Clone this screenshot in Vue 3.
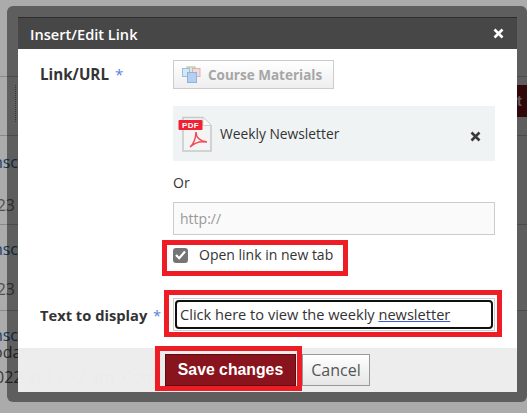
<template>
  <div class="screen">
    <div class="page" aria-hidden="true">
      <i class="rule r1"></i><i class="rule r2"></i><i class="rule r3"></i><i class="rule r4"></i>
      <i class="dots"></i>
      <i class="hatch"></i>
      <b class="red">t</b>
      <span class="link l1">nsc</span><span class="num n1">23</span>
      <span class="link l2">nsc</span><span class="num n2">23</span>
      <span class="link l3">nsc</span>
      <span class="body b1">odate.</span>
      <span class="body b2">022 at 11:32 am&nbsp; Comment</span>
    </div>
    <div class="shade"></div>
    <div class="frame">
      <section class="dialog">
        <header class="head">
          <h1>Insert/Edit Link</h1>
          <svg class="close" width="11" height="11" viewBox="0 0 11 11"><path d="M1.5 1.5l8 8M9.5 1.5l-8 8" stroke="#fff" stroke-width="2.6"/></svg>
        </header>
        <div class="content">
          <div class="row first">
            <label class="lab">Link/URL <em>*</em></label>
            <div class="ctl">
              <button class="course">
                <svg width="19" height="18" viewBox="0 0 19 18">
                  <rect x="5" y="1" width="8" height="8" fill="#dfe9d5" stroke="#a9c29b"/>
                  <rect x="10.500" y="2.500" width="7.500" height="8" fill="#f1dcdc" stroke="#d9b3b3"/>
                  <rect x="0.500" y="2.500" width="7" height="8" fill="#d7e6f3" stroke="#9dbdd8"/>
                  <rect x="5.500" y="6.500" width="9" height="10" fill="#b5cff2" stroke="#8fb2de"/>
                </svg>
                Course Materials
              </button>
              <div class="file">
                <svg class="pdf" width="36" height="38" viewBox="0 0 36 38">
                  <path d="M5 2.500h20l8 8V36H5z" fill="#f4f4f4" stroke="#c8c8c8" stroke-width="1.500"/>
                  <path d="M25 2.500v8h8" fill="#fff" stroke="#cfcfcf"/>
                  <rect x="0.500" y="5" width="24" height="10" rx="1" fill="#ee2233"/>
                  <text x="12.500" y="13" text-anchor="middle" class="pdftxt">PDF</text>
                  <path d="M12 32c4-3 6-10 6-15 0 5 3 9 11 10-6-1-12 0-17 5z" fill="none" stroke="#ee4a58" stroke-width="1.500"/>
                </svg>
                <span class="fname">Weekly Newsletter</span>
                <svg class="remove" width="11" height="11" viewBox="0 0 11 11"><path d="M1.500 1.500l8 8M9.500 1.500l-8 8" stroke="#3a3a3a" stroke-width="2.600"/></svg>
              </div>
              <div class="or">Or</div>
              <div class="url">http://</div>
              <div class="check">
                <span class="box"><svg width="11" height="10" viewBox="0 0 11 10"><path d="M1 5l3.200 3.200L10 1.500" fill="none" stroke="#fff" stroke-width="2.200"/></svg></span>
                Open link in new tab
              </div>
            </div>
          </div>
          <div class="row second">
            <label class="lab">Text to display <em>*</em></label>
            <div class="ctl">
              <div class="outer"><div class="inner">Click here to view the weekly <u>newsletter</u></div></div>
            </div>
          </div>
          <i class="mark m1"></i>
          <i class="mark m2"></i>
        </div>
        <footer class="foot">
          <button class="save">Save changes</button>
          <button class="cancel">Cancel</button>
          <i class="mark m3"></i>
        </footer>
      </section>
    </div>
  </div>
</template>

<script setup>
</script>

<style>
html, body { margin: 0; padding: 0; }
</style>

<style scoped>
.screen { position: relative; width: 527px; height: 413px; overflow: hidden; background: #fff; font-family: "Open Sans", sans-serif; color: #333; box-sizing: border-box; padding: 6px 0 0 7px; }
.page, .shade { position: absolute; inset: 0; }
.shade { background: rgba(0,0,0,.33); }
.page span, .page b, .page i { position: absolute; }
.rule { height: 1px; background: #ccc; left: 0; width: 527px; }
.r1 { top: 76px; } .r2 { top: 135px; } .r3 { top: 224px; } .r4 { top: 310px; }
.dots { left: 15px; top: 85px; height: 37px; border-left: 1px dotted #999; }
.hatch { left: 519px; top: 62px; width: 8px; height: 11px; background: repeating-linear-gradient(135deg, transparent 0 2px, #fff 2px 3px); }
.red { left: 517px; top: 85px; width: 10px; height: 32px; background: #8a141d; color: #fff; font: 700 14px/32px "Liberation Sans", sans-serif; }
.link, .num, .body { font-size: 16px; line-height: 20px; white-space: nowrap; }
.link { color: #2a6496; right: 509px; }
.num { color: #777; right: 512px; }
.l1 { top: 152px; } .l2 { top: 239px; } .l3 { top: 325px; }
.n1 { top: 195px; } .n2 { top: 279px; }
.body { color: #555; }
.b1 { left: -7px; top: 342px; }
.b2 { left: -5px; top: 367px; }

.frame { position: relative; width: 520px; height: 396px; box-sizing: border-box; padding: 11px 10px 10px 11px; background: rgba(0,0,0,.45); border-radius: 6px; }
.dialog { display: flex; flex-direction: column; height: 375px; }
.head { height: 32px; box-sizing: border-box; background: #474747; border-top: 1px solid #2e2e2e; display: flex; align-items: center; justify-content: space-between; padding: 0 13px 0 12px; flex: none; }
.head h1 { margin: 0; font-size: 14.600px; font-weight: 600; color: #fff; line-height: 20px; }
.content { position: relative; background: #fff; flex: 1; padding: 11px 22px 0 22px; }
.row { display: flex; }
.lab { width: 133px; flex: none; font-size: 14.700px; font-weight: 700; color: #333; line-height: 20px; }
.lab em { font-style: normal; font-weight: 400; color: #5a7fe0; margin-left: 2px; }
.first .lab { margin-top: 4px; font-size: 15.200px; }
.ctl { flex: 1; min-width: 0; }
.course { display: flex; align-items: center; gap: 7px; width: 161px; height: 29px; box-sizing: border-box; padding: 0 0 0 8px; border: 1px solid #ccc; background: linear-gradient(#fff, #eee); color: #a6a6a6; font: 700 13.500px "Open Sans", sans-serif; }
.file { display: flex; align-items: center; height: 55px; margin-top: 17px; background: #eff3f4; box-sizing: border-box; padding: 0 14px 0 5px; }
.pdf { flex: none; }
.pdftxt { font: 700 8px "Liberation Sans", sans-serif; fill: #fff; letter-spacing: .3px; }
.fname { margin-left: 6px; font-size: 13.800px; flex: 1; color: #333; }
.remove { margin-top: 5px; }
.or { font-size: 14px; line-height: 20px; margin-top: 12px; }
.url { margin-top: 9px; height: 33px; box-sizing: border-box; border: 1px solid #ccc; background: #fafafa; color: #999; font-size: 14px; line-height: 31px; padding-left: 6px; }
.check { display: flex; align-items: center; font-size: 14px; line-height: 20px; margin-top: 10px; height: 20px; }
.box { width: 15px; height: 15px; background: #757575; border-radius: 3px; display: flex; align-items: center; justify-content: center; margin-right: 11px; }
.second { margin-top: 33px; align-items: center; }
.outer { height: 33px; box-sizing: border-box; border: 1px solid #ccc; padding: 1px; }
.inner { height: 100%; box-sizing: border-box; border: 2px solid #101010; border-radius: 4px; font-size: 14.600px; line-height: 25px; padding-left: 3px; white-space: nowrap; }
.inner u { text-decoration-color: #3b5bdb; }
.foot { position: relative; height: 44px; box-sizing: border-box; background: rgba(243,243,243,.965); display: flex; align-items: flex-start; padding: 6px 0 0 147px; gap: 6px; flex: none; }
.save { width: 131px; height: 32px; border: 1px solid #5f0d13; background: #8a141d; color: #fff; font: 700 15.800px "Liberation Sans", sans-serif; padding: 0; }
.cancel { width: 68px; height: 32px; border: 1px solid #999; background: linear-gradient(#fff, #e6e6e6); color: #555; font: 400 16px "Open Sans", sans-serif; padding: 0; }
.mark { position: absolute; border: 5px solid #ee1c25; box-sizing: border-box; }
.m1 { left: 144px; top: 191px; width: 186px; height: 36px; }
.m2 { left: 146px; top: 241px; width: 338px; height: 47px; }
.m3 { left: 137px; top: -2px; width: 147px; height: 45px; }
</style>
